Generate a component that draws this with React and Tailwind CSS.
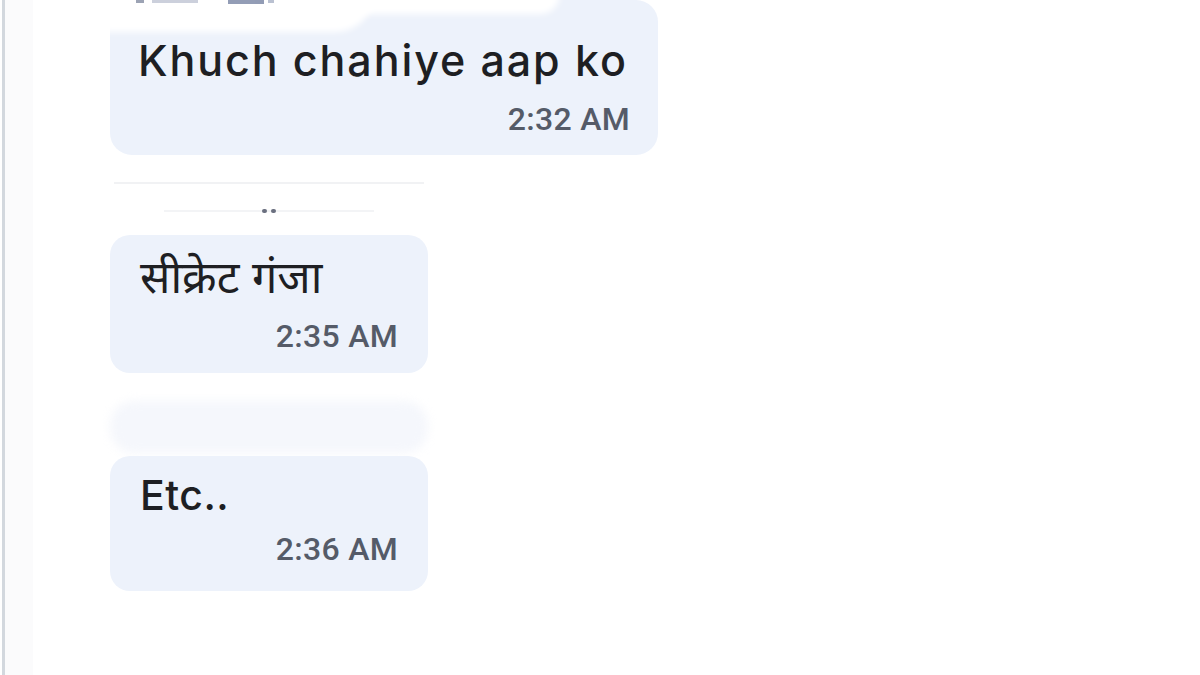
const Smudge = ({ className }) => (
  <div className={`absolute bg-white blur-[3px] ${className}`} />
);

const Time = ({ children, className = '' }) => (
  <p
    className={`self-end text-[32px] leading-[36px] text-[#555b68] font-medium tracking-[0.3px] ${className}`}
    style={{ fontFamily: 'Roboto, "Open Sans", sans-serif' }}
  >
    {children}
  </p>
);

export default function App() {
  return (
    <div
      className="w-[1200px] h-[675px] overflow-hidden bg-white flex"
      style={{ fontFamily: 'Inter, "Noto Sans Devanagari", "Noto Sans", sans-serif' }}
    >
      <div className="w-[3px] h-full bg-[#d3d8de] ml-[2px]" />
      <div className="w-[28px] h-full bg-[#fbfbfc]" />
      <div className="flex-1 pl-[77px] flex flex-col items-start">
        {/* first bubble, top cut off */}
        <div className="relative w-[548px] h-[155px] bg-[#edf2fb] rounded-b-[22px] rounded-tr-[22px] pl-[28px] pr-[28px] pt-[34px] flex flex-col">
          <Smudge className="left-[-6px] top-[-6px] w-[270px] h-[38px] rounded-br-[40px]" />
          <Smudge className="left-[200px] top-[-6px] w-[250px] h-[20px] rounded-b-[30px]" />
          <div className="absolute left-[26px] top-[0px] flex gap-[8px] opacity-50">
            <span className="block w-[8px] h-[3px] bg-[#3b4a6b]" />
            <span className="block w-[46px] h-[3px] bg-[#9aa3bb]" />
          </div>
          <div className="absolute left-[118px] top-[0px] flex gap-[4px] opacity-60">
            <span className="block w-[36px] h-[4px] bg-[#4b5b85]" />
            <span className="block w-[6px] h-[3px] bg-[#8d98b3]" />
          </div>
          <p className="whitespace-nowrap text-[43px] leading-[52px] text-[#1e1f23] font-[450] tracking-[1.9px]">Khuch chahiye aap ko</p>
          <Time className="mt-[15px]">2:32 AM</Time>
        </div>

        {/* redacted name lines */}
        <div className="w-[318px] h-[80px] flex flex-col items-center pt-[27px]">
          <div className="w-[310px] h-[2px] bg-[#f1f2f4]" />
          <div className="w-[210px] h-[2px] bg-[#f3f4f6] mt-[26px] flex justify-center gap-[4px]">
            <span className="block w-[5px] h-[4px] -mt-[1px] bg-[#6b7080] rounded-full" />
            <span className="block w-[5px] h-[4px] -mt-[1px] bg-[#6b7080] rounded-full" />
          </div>
        </div>

        <div className="w-[318px] h-[138px] bg-[#edf2fb] rounded-[20px] pl-[30px] pr-[30px] pt-[12px] flex flex-col">
          <p className="text-[45px] leading-[60px] text-[#1e1f23]">सीक्रेट गंजा</p>
          <Time className="mt-[11px]">2:35 AM</Time>
        </div>

        <div className="relative w-[318px] h-[218px] flex flex-col justify-end">
          <div className="absolute left-[0px] top-[28px] w-[318px] h-[52px] bg-[#f5f7fc] rounded-[24px] blur-[5px]" />
          <div className="relative w-[318px] h-[135px] bg-[#edf2fb] rounded-[20px] pl-[30px] pr-[30px] pt-[14px] flex flex-col">
            <p className="text-[41px] leading-[50px] text-[#1e1f23] font-[450] tracking-[0.5px]">Etc..</p>
            <Time className="mt-[11px]">2:36 AM</Time>
          </div>
        </div>
      </div>
    </div>
  );
}
